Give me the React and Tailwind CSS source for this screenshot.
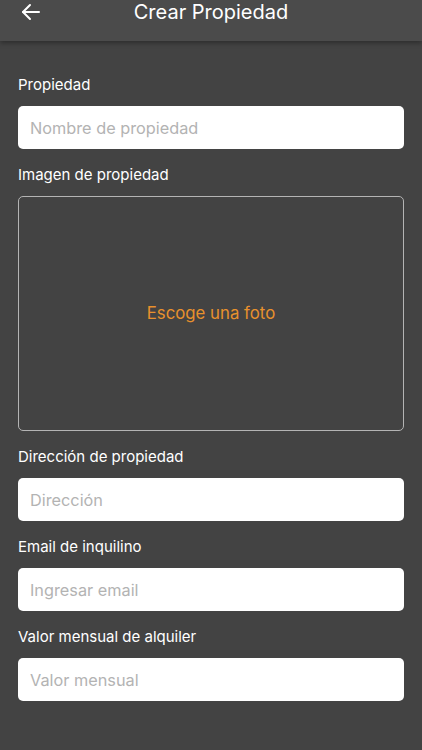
import React from "react";

function Field({ label, placeholder }) {
  return (
    <div className="flex flex-col">
      <label className="text-[15px] leading-[18px] text-white">{label}</label>
      <input
        className="mt-[12px] h-[43px] w-full rounded-[5px] bg-white px-[12px] text-[16.3px] text-gray-800 outline-none placeholder:text-[#b3b3b3]"
        placeholder={placeholder}
      />
    </div>
  );
}

export default function App() {
  return (
    <div
      className="flex h-[750px] w-[422px] flex-col bg-[#434343]"
      style={{ fontFamily: "Inter, 'Noto Sans', sans-serif" }}
    >
      <div className="relative z-10 flex h-[41px] shrink-0 items-start bg-[#4b4b4b] shadow-[0_2px_5px_rgba(0,0,0,0.35)]">
        <button className="absolute left-[20px] top-[2px] flex h-[20px] w-[22px] items-center justify-center text-white">
          <svg width="20" height="18" viewBox="0 0 20 18" fill="none" stroke="white" strokeWidth="2" strokeLinecap="round" strokeLinejoin="round">
            <path d="M18 9H2" />
            <path d="M9 2L2 9l7 7" />
          </svg>
        </button>
        <h1 className="w-full text-center text-[20px] leading-[25px] text-white">Crear Propiedad</h1>
      </div>
      <div className="flex flex-col px-[18px] pt-[35px]">
        <Field label="Propiedad" placeholder="Nombre de propiedad" />
        <div className="mt-[17px] flex flex-col">
          <label className="text-[15px] leading-[18px] text-white">Imagen de propiedad</label>
          <button className="mt-[12px] flex h-[235px] w-full items-center justify-center rounded-[5px] border-[1.5px] border-[#b4b4b4] text-[16.8px] text-[#e8912d]">
            Escoge una foto
          </button>
        </div>
        <div className="mt-[17px]">
          <Field label="Dirección de propiedad" placeholder="Dirección" />
        </div>
        <div className="mt-[17px]">
          <Field label="Email de inquilino" placeholder="Ingresar email" />
        </div>
        <div className="mt-[17px]">
          <Field label="Valor mensual de alquiler" placeholder="Valor mensual" />
        </div>
      </div>
    </div>
  );
}
